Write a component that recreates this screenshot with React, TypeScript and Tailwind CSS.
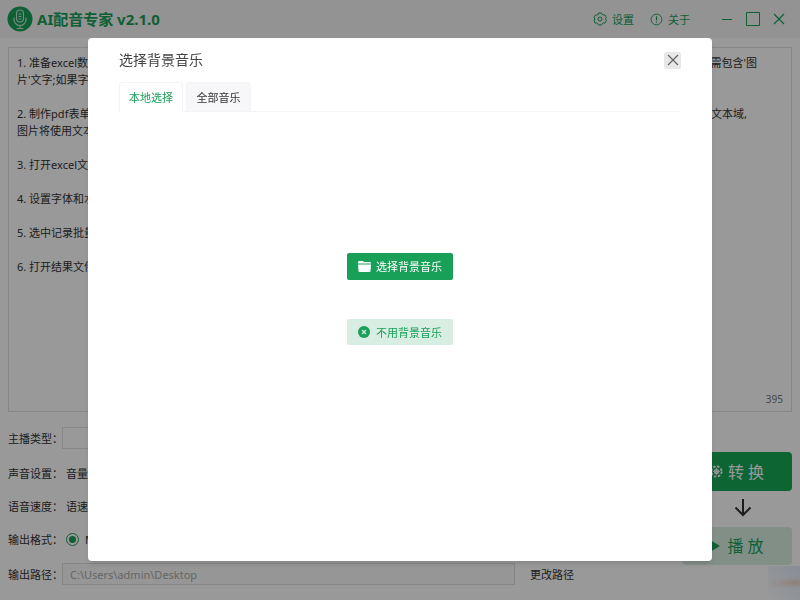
import React from "react";

const guide = [
  "1. 准备excel数据文件,第一行为字段名称,从第二行开始为记录内容,每一行代表一条完整的独立记录信息; 如需在表单中插入图片,对应字段名称中需包含'图",
  "片'文字;如果字段内容为图片,请填写图片完整路径。",
  "",
  "2. 制作pdf表单模板,在模板中添加文本域,并设置好各个文本域对应的大小和位置,文本域名称需与excel字段名称保持一致,每个字段对应模板中的文本域,",
  "图片将使用文本域的位置和大小进行填充。",
  "",
  "3. 打开excel文件和pdf模板文件。",
  "",
  "4. 设置字体和水印等选项。",
  "",
  "5. 选中记录批量生成文件。",
  "",
  "6. 打开结果文件夹查看。",
].join("\n");

function Logo() {
  return (
    <svg viewBox="0 0 26 26" className="size-[26px]" aria-hidden="true">
      <circle cx="13" cy="13" r="12.5" fill="#18a058" />
      <g fill="none" stroke="#c9e6d6" strokeWidth="1.1" strokeLinecap="round">
        <rect x="9.5" y="4" width="7" height="12" rx="3.5" />
        <path d="M7 12v1.500a6 6 0 0 0 12 0V12M13 19.500v3M10 22.500h6M12 8h2M12 10.500h2M12 13h2" />
      </g>
    </svg>
  );
}

function Header() {
  return (
    <header className="flex h-[38px] items-center bg-[#f4f5f4] pl-[7px] pr-[15px] text-[#18a058]">
      <Logo />
      <h1 className="ml-1 flex-1 text-[15px] font-bold">AI配音专家 v2.1.0</h1>
      <button className="flex items-center gap-[5px]">
        <svg viewBox="0 0 14 14" className="size-[14px]" fill="none" stroke="currentColor">
          <path d="M5.500 1h3l.6 1.300 1.500.8 1.400-.1 1.300 2.500-.8 1.500.8 1.500-1.300 2.500-1.400-.1-1.500.8-.6 1.300h-3l-.6-1.300-1.500-.8-1.400.1L1.100 8.500 1.900 7l-.8-1.500L2.400 3l1.400.1 1.500-.8z" />
          <circle cx="7" cy="7" r="2" />
        </svg>
        设置
      </button>
      <button className="ml-4 flex items-center gap-[5px]">
        <svg viewBox="0 0 14 14" className="size-[13px]" fill="none" stroke="currentColor">
          <circle cx="7" cy="7" r="5.800" />
          <path d="M7 3.500v4.500M7 9.300v1.200" strokeWidth="1.200" />
        </svg>
        关于
      </button>
      <div className="ml-[31px] flex items-center gap-[13px]">
        <button aria-label="最小化">
          <svg viewBox="0 0 12 14" className="h-[14px] w-3" stroke="currentColor"><path d="M1 7.500h10" /></svg>
        </button>
        <button aria-label="最大化">
          <svg viewBox="0 0 14 14" className="size-[14px]" fill="none" stroke="currentColor"><path d="M.5.500h13v13H.5z" /></svg>
        </button>
        <button aria-label="关闭窗口">
          <svg viewBox="0 0 12 12" className="size-3" stroke="currentColor" strokeWidth="1.200"><path d="m1 1 10 10M11 1 1 11" /></svg>
        </button>
      </div>
    </header>
  );
}

function Settings() {
  return (
    <form className="flex justify-between gap-4 px-2 pt-[14px]">
      <div className="flex min-w-0 grow flex-col whitespace-nowrap">
        <div className="flex h-[24px] items-center">
          <label htmlFor="voice" className="w-[54px] shrink-0">主播类型：</label>
          <select id="voice" className="h-[22px] w-[200px] appearance-none border border-[#e0e0e0] bg-white px-8">
            <option>默认</option>
          </select>
        </div>
        <div className="mt-[11px] flex h-[24px] items-center">
          <span className="w-[58px] shrink-0">声音设置：</span>
          <label htmlFor="volume">音量</label>
          <input id="volume" type="range" className="ml-2 w-[150px] accent-[#18a058]" />
        </div>
        <div className="mt-[9px] flex h-[24px] items-center">
          <span className="w-[58px] shrink-0">语音速度：</span>
          <label htmlFor="speed">语速</label>
          <input id="speed" type="range" className="ml-2 w-[150px] accent-[#18a058]" />
        </div>
        <div role="radiogroup" aria-labelledby="format-label" className="mt-[9px] flex h-[24px] items-center">
          <span id="format-label" className="w-[58px] shrink-0">输出格式：</span>
          <input
            id="mp3"
            type="radio"
            name="format"
            defaultChecked
            className="size-[13px] appearance-none rounded-full border border-[#18a058] bg-[#18a058] bg-clip-content p-[2px]"
          />
          <label htmlFor="mp3" className="ml-[6px]">MP3</label>
        </div>
        <div className="mt-[11px] flex h-[24px] items-center">
          <label htmlFor="path" className="w-[54px] shrink-0">输出路径：</label>
          <input
            id="path"
            readOnly
            value="C:\Users\admin\Desktop"
            className="h-[22px] min-w-0 grow border border-[#dedede] bg-[#fafafa] px-[7px] text-[#aaa]"
          />
          <button type="button" className="ml-[15px] mr-[92px] shrink-0">更改路径</button>
        </div>
      </div>
      <div className="mt-[26px] flex w-[110px] shrink-0 flex-col items-center">
        <button type="button" className="flex h-[39px] w-full items-center justify-center gap-[5px] rounded-sm bg-[#18a858] text-base text-white">
          <svg viewBox="0 0 14 14" className="size-[13px]" fill="none" stroke="currentColor">
            <circle cx="7" cy="7" r="5.500" strokeWidth="2" strokeDasharray="2.600 1.720" />
            <circle cx="7" cy="7" r="2" strokeWidth="1.500" />
            <path d="M7 3v8M3 7h8" strokeWidth=".8" />
          </svg>
          <span>转 换</span>
        </button>
        <svg viewBox="0 0 18 18" className="mb-[10px] ml-3 mt-2 size-[18px]" fill="none" stroke="#333" strokeWidth="2">
          <path d="M9 0v16M1.500 8.500 9 16 16.500 8.500" />
        </svg>
        <button type="button" className="flex h-[38px] w-full items-center justify-center gap-[7px] rounded-sm bg-[#d9eee2] text-base text-[#18a058]">
          <svg viewBox="0 0 10 12" className="h-3 w-[10px]" fill="currentColor"><path d="M0 0v12l10-6z" /></svg>
          <span>播 放</span>
        </button>
      </div>
    </form>
  );
}

function MusicDialog() {
  return (
    <div className="fixed inset-0 flex bg-black/40 px-[88px] pb-[39px] pt-[38px]">
      <section role="dialog" aria-modal="true" aria-labelledby="dialog-title" className="flex grow flex-col rounded-sm bg-white px-[31px] pt-3 shadow-md">
        <div className="flex h-5 items-center justify-between">
          <h2 id="dialog-title" className="text-sm text-[#444]">选择背景音乐</h2>
          <button aria-label="关闭" className="flex size-[17px] items-center justify-center rounded-xs bg-[#e8e8e8] text-[#666]">
            <svg viewBox="0 0 12 12" className="size-3" stroke="currentColor" strokeWidth="1.300"><path d="m1 1 10 10M11 1 1 11" /></svg>
          </button>
        </div>
        <div role="tablist" className="mt-3 flex h-[30px] gap-[3px] border-b border-[#f4f4f6]">
          <button role="tab" aria-selected="true" className="-mb-px w-16 rounded-t-sm border border-b-0 border-[#f4f4f6] bg-white text-[#18a058]">本地选择</button>
          <button role="tab" aria-selected="false" className="w-[65px] rounded-t-sm border border-b-0 border-[#f4f4f6] bg-[#f7f7fa]">全部音乐</button>
        </div>
        <div role="tabpanel" className="flex grow flex-col items-center gap-[39px] pt-[141px]">
          <button className="flex h-[27px] w-[106px] items-center justify-center gap-[5px] rounded-xs bg-[#18a058] text-white">
            <svg viewBox="0 0 13 11" className="h-[11px] w-[13px]" fill="currentColor">
              <path d="M0 1.500Q0 0 1 0h4l1 1h6q1 0 1 1v.5H0zM0 3.500h13l-.5 6.500q0 1-1 1h-10q-1 0-1-1z" />
            </svg>
            选择背景音乐
          </button>
          <button className="flex h-[26px] w-[106px] items-center justify-center gap-[6px] rounded-xs bg-[#d9eee2] text-[#18a058]">
            <svg viewBox="0 0 12 12" className="size-3">
              <circle cx="6" cy="6" r="6" fill="currentColor" />
              <path d="m4 4 4 4M8 4 4 8" stroke="#d9eee2" strokeWidth="1.200" />
            </svg>
            不用背景音乐
          </button>
        </div>
      </section>
    </div>
  );
}

export default function App() {
  return (
    <div className="min-h-screen bg-white font-['Noto_Sans','Noto_Sans_CJK_SC',sans-serif] text-[11px] leading-[17px] text-[#333]">
      <Header />
      <main>
        <div className="mx-2 mt-[9px] flex flex-col border border-[#e0e0e0]">
          <textarea
            aria-label="配音文本"
            defaultValue={guide}
            className="h-[343px] resize-none overflow-hidden px-2 pt-[6px] leading-[17px]"
          />
          <output className="h-[20px] pr-2 text-right text-[10px] text-[#777]">395</output>
        </div>
        <Settings />
      </main>
      <div className="fixed bottom-0 right-0 flex h-[34px] w-8 items-center bg-linear-to-bl from-[#e4edfa] to-transparent">
        <span className="h-1 w-full bg-linear-to-r from-transparent to-[#f0c0a4] blur-[2px]" />
      </div>
      <MusicDialog />
    </div>
  );
}
